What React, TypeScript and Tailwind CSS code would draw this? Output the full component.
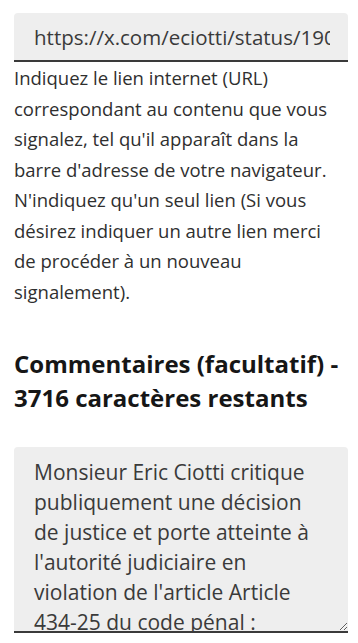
export default function App() {
  return (
    <div className="min-h-screen bg-white font-['Open_Sans','Liberation_Sans',sans-serif] text-[#3a3a3a]">
      <div className="pl-[14px] pr-[10px] pt-[13px]">
        {/* URL field */}
        <input
          type="text"
          readOnly
          value="https://x.com/eciotti/status/1900123456789012345"
          className="block w-full h-[49px] pl-5 pr-[18px] bg-[#eeeeee] rounded-t-[4px] border-b-2 border-[#3a3a3a] text-[20.5px] text-[#3a3a3a] outline-none"
        />
        <p className="mt-px pr-1 text-[18.5px] leading-[30.5px] text-[#2f2f2f]">
          Indiquez le lien internet (URL) correspondant au contenu que vous signalez, tel qu'il apparaît dans la barre
          d'adresse de votre navigateur. N'indiquez qu'un seul lien (Si vous désirez indiquer un autre lien merci de
          procéder à un nouveau signalement).
        </p>

        {/* Comments */}
        <h2 className="mt-10 text-[24px] leading-[34px] font-bold text-[#161616]">
          Commentaires (facultatif) - 3716 caractères restants
        </h2>
        <textarea
          readOnly
          className="mt-8 block w-full h-[186px] pl-5 pr-6 py-[10px] bg-[#eeeeee] rounded-t-[4px] border-b-2 border-[#3a3a3a] text-[21px] leading-[30px] text-[#3a3a3a] outline-none"
          value={
            "Monsieur Eric Ciotti critique publiquement une décision de justice et porte atteinte à l'autorité judiciaire en violation de l'article Article 434-25 du code pénal :\n« Le fait de chercher à jeter le discrédit, publiquement par actes, paroles, écrits ou images de toute nature, sur un acte ou une décision juridictionnelle, dans des conditions de nature à porter atteinte à l'autorité de la justice ou à son indépendance est puni de six mois d'emprisonnement et de 7 500 euros d'amende. »"
          }
        />
      </div>
    </div>
  );
}
